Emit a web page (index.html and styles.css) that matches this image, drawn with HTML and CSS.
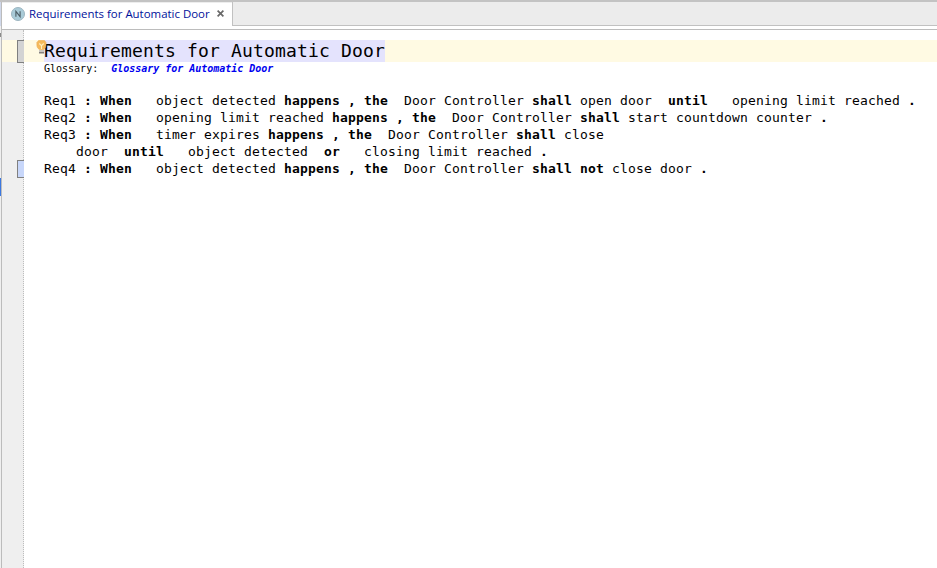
FILE: index.html
```html
<!DOCTYPE html>
<html lang="en">
<head>
<meta charset="utf-8">
<title>Requirements for Automatic Door</title>
<link rel="stylesheet" href="styles.css">
</head>
<body>
<div class="window">
  <aside class="edge"><i class="edge-top"></i><i class="edge-mark"></i><i class="edge-select"></i></aside>
  <main class="pane">
    <header class="tabs">
      <div class="tab">
        <svg class="node-icon" width="14" height="14" viewBox="0 0 14 14"><circle cx="7" cy="7" r="6.5" fill="#a9cbd8" stroke="#9db5c0"/><path d="M4.9 9.7V4.4L9.1 9.6V4.3" fill="none" stroke="#4b5b63" stroke-width="1.1"/></svg>
        <span class="tab-title">Requirements for Automatic Door</span>
        <svg class="close" width="7" height="7" viewBox="0 0 7 7"><path d="M.6.6l5.8 5.8M6.4.6L.6 6.4" stroke="#686868" stroke-width="1.7"/></svg>
      </div>
      <div class="tab-fill"></div>
    </header>
    <section class="editor">
      <div class="gutter"></div>
      <div class="row heading">
        <span class="fold fold-gray"></span>
        <svg class="bulb" width="11" height="15" viewBox="0 0 11 15"><path d="M3.200 9.400C1.600 8.200.9 7 .9 5V2.500L2.500.6h6L10 2.500V5c0 2-.8 3.200-2.300 4.400z" fill="#f5b95c" stroke="#eba94d" stroke-width=".6"/><path d="M3.300 3.500l2.200 2.200 2.200-2.200M5.500 5.700V9" fill="none" stroke="#fff0c0" stroke-width="1.100"/><path d="M3 10h5v2H3z" fill="#cbc8c2"/><path d="M3 12h5v1.500H3z" fill="#858280"/></svg>
        <h1>Requirements for Automatic Door</h1>
      </div>
      <div class="row glossary">Glossary:  <a>Glossary for Automatic Door</a></div>
      <div class="requirements">
        <div class="row">Req1 <b>:</b> <b>When</b>   object detected <b>happens , the</b>  Door Controller <b>shall</b> open door  <b>until</b>   opening limit reached <b>.</b></div>
        <div class="row">Req2 <b>:</b> <b>When</b>   opening limit reached <b>happens , the</b>  Door Controller <b>shall</b> start countdown counter <b>.</b></div>
        <div class="row">Req3 <b>:</b> <b>When</b>   timer expires <b>happens , the</b>  Door Controller <b>shall</b> close</div>
        <div class="row">    door  <b>until</b>   object detected  <b>or</b>   closing limit reached <b>.</b></div>
        <div class="row"><span class="fold fold-blue"></span>Req4 <b>:</b> <b>When</b>   object detected <b>happens , the</b>  Door Controller <b>shall not</b> close door <b>.</b></div>
      </div>
    </section>
  </main>
</div>
</body>
</html>
```
FILE: styles.css
```css
* { box-sizing: border-box; }
body { margin: 0; overflow: hidden; background: #fff; }
.window { display: flex; height: 568px; border-top: 2px solid #c3c3c3; }
.edge { width: 2px; flex: none; background: #efefef; border-right: 1px solid #bcbcbc; display: flex; flex-direction: column; }
.edge-top { height: 24px; background: #d0d8ea; }
.edge-mark { height: 4px; margin-top: 7px; background: #8a8a8a; }
.edge-select { height: 18px; margin-top: 141px; background: #3c78e0; }
.pane { flex: 1; min-width: 0; display: flex; flex-direction: column; }
.tabs { display: flex; height: 28px; border-bottom: 1px solid #bcbcbc; padding-bottom: 3px; background: #fff; }
.tab { display: flex; align-items: center; width: 230px; padding: 0 0 2px 9px; border-top: 1px solid #ededed; }
.node-icon { flex: none; margin-right: 4px; }
.tab-title { width: 182px; white-space: nowrap; font: 11.45px/16px "Open Sans", sans-serif; color: #00109a; }
.close { margin-left: 6px; }
.tab-fill { flex: 1; background: #ececec; border: solid #c1c1c1; border-width: 0 0 1px 1px; }
.editor { position: relative; flex: 1; padding-top: 10px; font-family: "DejaVu Sans Mono", monospace; color: #000; }
.gutter { position: absolute; inset: 0 auto 0 0; width: 22px; background: #efefef; border-right: 1px dotted #bdbdbd; }
.row { position: relative; padding-left: 42px; white-space: pre; }
.heading { display: flex; height: 22px; background: #fffae3; white-space: nowrap; }
.heading h1 { margin: 0; height: 22px; font-size: 18px; line-height: 22px; font-weight: 400; letter-spacing: .163px; background: #e4e3fd; }
.fold { position: absolute; left: 15px; width: 7px; border: 1px solid #808080; border-right: 0; }
.fold-gray { top: 0; height: 23px; background: #d3d3d3; }
.fold-blue { top: 0; height: 18px; background: #c8d7fa; }
.bulb { position: absolute; left: 34px; top: 0; z-index: 1; }
.glossary { height: 15px; font-size: 10px; line-height: 13px; }
.glossary a { margin-left: 1px; font-weight: 700; font-style: italic; letter-spacing: -.02px; color: #0000f0; }
.requirements { padding-top: 15px; font-size: 13px; line-height: 17px; letter-spacing: .173px; }
.requirements .row { height: 17px; }
```
